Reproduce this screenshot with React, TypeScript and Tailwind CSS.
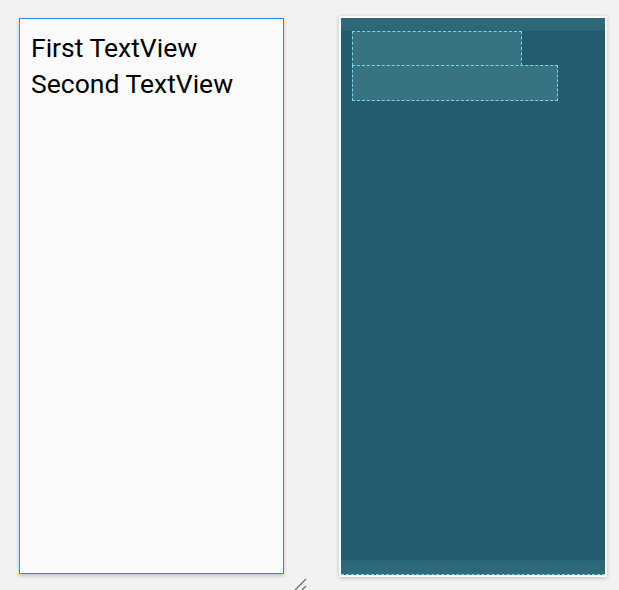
export default function App() {
  return (
    <div className="relative h-[590px] w-[619px] overflow-hidden bg-[#f2f2f2] font-['Roboto',sans-serif]">
      <div className="flex items-start pl-[19px] pt-[16px]">
        {/* design */}
        <div className="mt-[2px] flex h-[556px] w-[265px] flex-col border border-[#1f8bff] bg-[#fafafa] px-[11px] py-[11px] shadow-[0_2px_4px_rgba(0,0,0,0.2)]">
          <div className="text-[26.5px] leading-[36px] text-black">First TextView</div>
          <div className="text-[26.5px] leading-[36px] text-black">Second TextView</div>
        </div>

        {/* blueprint */}
        <div className="ml-[55px] h-[561px] w-[268px] border-2 border-[#fbfbfb] shadow-[0_1px_4px_rgba(0,0,0,0.22)]">
          <div className="flex h-full flex-col bg-[#235c6d]">
            <div className="h-[13px] bg-gradient-to-b from-[#2f6b7b] to-[#2b6677]" />
            <div className="flex flex-1 flex-col items-start pl-[11px]">
              <div className="h-[35px] w-[170px] border border-dashed border-[#74d6ea] bg-[#387381]" />
              <div className="-mt-px h-[36px] w-[206px] border border-dashed border-[#74d6ea] bg-[#387381]" />
            </div>
            <div className="h-[15px] border-b border-dashed border-[#74d6ea] bg-gradient-to-b from-[#2b6677] to-[#2f6b7b]" />
          </div>
        </div>
      </div>

      {/* resize handle */}
      <svg className="absolute left-[293px] top-[577px]" width="16" height="14" viewBox="0 0 16 14">
        <path d="M2 13 L13 2" stroke="#6b6b6b" strokeWidth="1.3" />
        <path d="M9 13 L13 9" stroke="#6b6b6b" strokeWidth="1.3" />
      </svg>
    </div>
  );
}
